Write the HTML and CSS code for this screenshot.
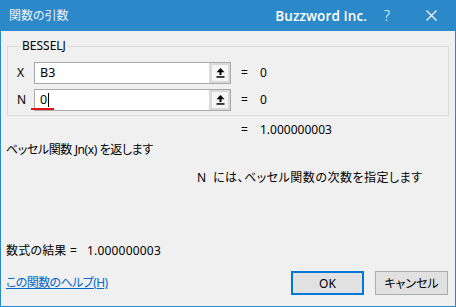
FILE: index.html
```html
<!DOCTYPE html>
<html lang="ja">
<head>
<meta charset="utf-8">
<title>関数の引数</title>
<link rel="stylesheet" href="styles.css">
</head>
<body>
<div class="window">
  <div class="titlebar">
    <span class="title">関数の引数</span>
    <span class="brand">Buzzword Inc.</span>
    <span class="help">?</span>
    <span class="close">
      <svg width="11" height="11" viewBox="0 0 11 11"><path d="M0.5 0.5 L10.5 10.5 M10.5 0.5 L0.5 10.5" stroke="#fff" stroke-width="1.1" fill="none"/></svg>
    </span>
  </div>
  <div class="content">
    <fieldset class="group">
      <legend>BESSELJ</legend>
      <div class="args">
        <div class="arg">
          <span class="arg-label">X</span>
          <div class="field">
            <span class="field-text">B3</span>
            <span class="ref-btn"><span class="ref-inner"><svg width="9" height="10" viewBox="0 0 9 10"><path d="M4.5 0 L8.5 4.2 L0.5 4.2 Z" fill="#000"/><rect x="3.5" y="4" width="2" height="3" fill="#000"/><rect x="0.5" y="8.2" width="8" height="1.5" fill="#000"/></svg></span></span>
          </div>
          <span class="eq">=</span>
          <span class="val">0</span>
        </div>
        <div class="arg">
          <span class="arg-label">N</span>
          <div class="field active">
            <span class="field-text">0<span class="caret"></span></span>
            <span class="ref-btn"><span class="ref-inner"><svg width="9" height="10" viewBox="0 0 9 10"><path d="M4.5 0 L8.5 4.2 L0.5 4.2 Z" fill="#000"/><rect x="3.5" y="4" width="2" height="3" fill="#000"/><rect x="0.5" y="8.2" width="8" height="1.5" fill="#000"/></svg></span></span>
            <span class="spell-mark"></span>
          </div>
          <span class="eq">=</span>
          <span class="val">0</span>
        </div>
      </div>
    </fieldset>
    <div class="result-row">
      <span class="eq">=</span>
      <span class="val">1.000000003</span>
    </div>
    <p class="desc">ベッセル関数 Jn(x) を返します</p>
    <p class="arg-desc"><span class="arg-name">N</span>には、ベッセル関数の次数を指定します</p>
    <p class="formula">数式の結果 =&nbsp;&nbsp; 1.000000003</p>
    <div class="footer">
      <a class="help-link" href="#">この関数のヘルプ(H)</a>
      <div class="buttons">
        <button class="btn default">OK</button>
        <button class="btn">キャンセル</button>
      </div>
    </div>
  </div>
</div>
</body>
</html>
```
FILE: styles.css
```css
* { box-sizing: border-box; }
html, body { margin: 0; padding: 0; background: #f0f0f0; }
body {
  font-family: "Noto Sans", "Noto Sans CJK JP", sans-serif;
  font-size: 12px;
  color: #000;
  font-feature-settings: "palt";
}
.window {
  width: 456px;
  height: 307px;
  border: 1px solid #2b88c9;
  border-top: none;
  background: #f0f0f0;
  display: flex;
  flex-direction: column;
}
.titlebar {
  height: 31px;
  margin: 0 -1px;
  background: #2b88c9;
  color: #fff;
  display: flex;
  align-items: center;
  padding-left: 9px;
}
.title {
  font-size: 12px;
  line-height: 16px;
  color: #eef5fb;
}
.brand {
  margin-left: auto;
  font-family: "Open Sans", "Noto Sans", sans-serif;
  font-weight: 600;
  font-size: 13.5px;
  letter-spacing: 0.1px;
}
.help {
  margin-left: 17px;
  font-family: "Noto Sans", sans-serif;
  font-weight: 300;
  font-size: 14px;
  width: 8px;
}
.close {
  margin-left: 34px;
  margin-right: 19px;
  display: flex;
}
.content {
  flex: 1;
  padding: 0 6px 0 5px;
  display: flex;
  flex-direction: column;
}
.group {
  margin: 8px 0 0 1px;
  border: 1px solid #dcdcdc;
  padding: 9px 0 4px 9px;
  min-width: 0;
}
.group legend {
  padding: 0 1px;
  margin-left: 4px;
  line-height: 14px;
  font-size: 12px;
}
.args {
  display: flex;
  flex-direction: column;
  gap: 5px;
}
.arg {
  display: grid;
  grid-template-columns: 17px 207px 19px auto;
  align-items: center;
}
.arg-label { line-height: 16px; }
.field {
  position: relative;
  height: 22px;
  border: 1px solid #a8a8a8;
  background: #fff;
  display: flex;
  width: 197px;
}
.field-text {
  flex: 1;
  padding-left: 5px;
  line-height: 20px;
  display: flex;
  align-items: center;
  font-size: 12.5px;
}
.caret {
  display: inline-block;
  width: 1px;
  height: 14px;
  background: #000;
  margin-left: 1px;
}
.ref-btn {
  width: 21px;
  background: #dadada;
  padding: 2px 2px 2px 3px;
  display: flex;
}
.ref-inner {
  flex: 1;
  background: #f6f6f6;
  display: flex;
  align-items: center;
  justify-content: center;
  padding-bottom: 1px;
}
.spell-mark {
  position: absolute;
  left: -4px;
  bottom: 0;
  width: 23px;
  height: 2px;
  background: #e0141e;
}
.eq, .val { line-height: 16px; }
.result-row {
  margin-top: 6px;
  padding-left: 235px;
  display: flex;
  line-height: 16px;
}
.result-row .eq { width: 19px; }
.desc {
  margin: 4px 0 0 0;
  line-height: 16px;
  letter-spacing: -0.4px;
}
.arg-desc {
  margin: 12px 0 0 0;
  padding-left: 191px;
  line-height: 16px;
  letter-spacing: 0.5px;
}
.arg-name { display: inline-block; width: 16px; letter-spacing: 0; }
.formula {
  margin: 57px 0 0 0;
  line-height: 16px;
  letter-spacing: 0.2px;
}
.footer {
  margin-top: 12px;
  display: flex;
  align-items: center;
  padding-right: 1px;
}
.help-link {
  color: #0066cc;
  text-decoration: underline;
  line-height: 16px;
  letter-spacing: -0.6px;
}
.buttons {
  margin-left: auto;
  display: flex;
  gap: 11px;
}
.btn {
  width: 73px;
  height: 24px;
  background: #e1e1e1;
  border: 1px solid #adadad;
  font-family: inherit;
  font-size: 12px;
  color: #000;
  padding: 0;
  font-feature-settings: "palt";
}
.btn.default {
  border: 2px solid #0078d7;
}
```
